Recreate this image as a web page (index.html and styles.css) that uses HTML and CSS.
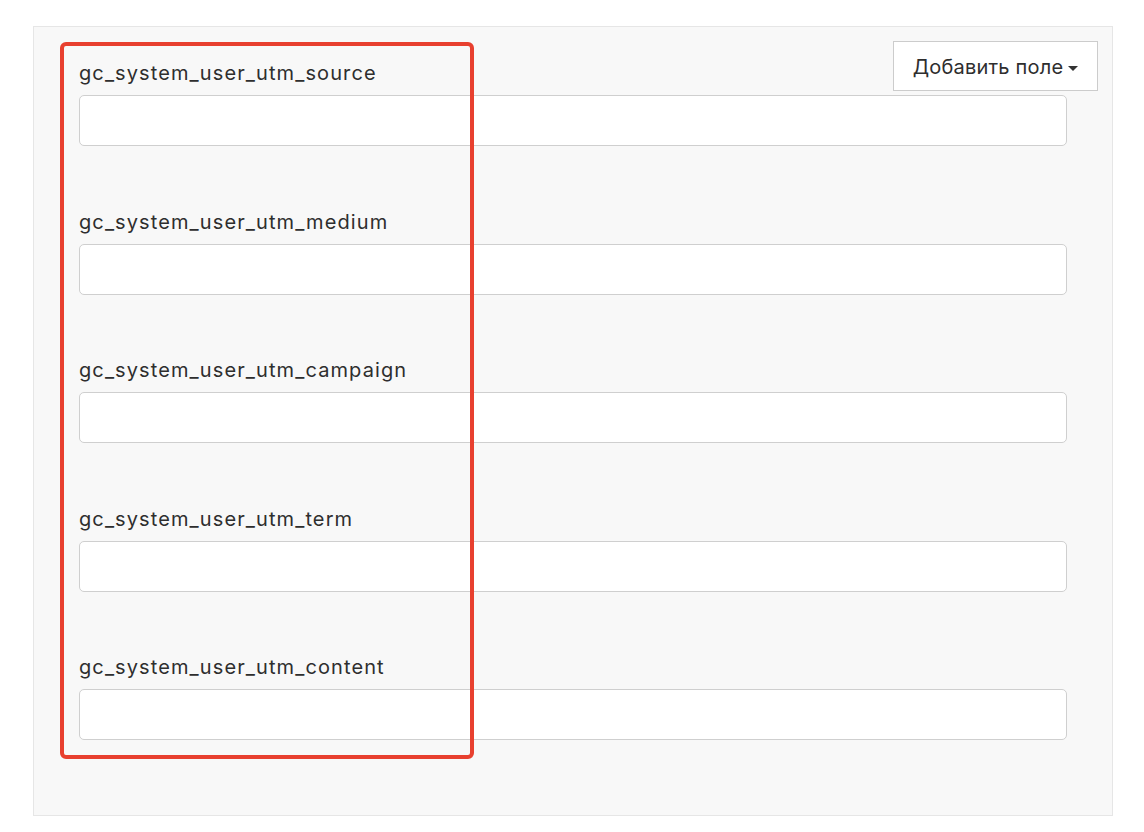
FILE: index.html
```html
<!DOCTYPE html>
<html lang="ru">
<head>
<meta charset="utf-8">
<link rel="stylesheet" href="styles.css">
</head>
<body>
<div class="panel">
  <button class="add-btn" type="button">Добавить поле <span class="caret"></span></button>
  <form class="fields">
    <div class="field">
      <label class="label">gc_system_user_utm_source</label>
      <input class="input" type="text">
    </div>
    <div class="field">
      <label class="label">gc_system_user_utm_medium</label>
      <input class="input" type="text">
    </div>
    <div class="field">
      <label class="label">gc_system_user_utm_campaign</label>
      <input class="input" type="text">
    </div>
    <div class="field">
      <label class="label">gc_system_user_utm_term</label>
      <input class="input" type="text">
    </div>
    <div class="field">
      <label class="label">gc_system_user_utm_content</label>
      <input class="input" type="text">
    </div>
  </form>
  <div class="highlight"></div>
</div>
</body>
</html>
```

FILE: styles.css
```css
html, body {
  margin: 0;
  padding: 0;
  background: #ffffff;
}
body {
  font-family: Inter, "Noto Sans", sans-serif;
  color: #333333;
}
.panel {
  position: relative;
  box-sizing: border-box;
  margin: 26px 0 0 33px;
  width: 1080px;
  height: 790px;
  background: #f8f8f8;
  border: 1px solid #e6e6e6;
  padding: 33px 45px 0 45px;
}
.fields {
  display: flex;
  flex-direction: column;
  gap: 62.5px;
}
.field {
  display: flex;
  flex-direction: column;
  gap: 9px;
}
.label {
  font-size: 20px;
  line-height: 26px;
  letter-spacing: 1.1px;
  color: #2e2e2e;
}
.input {
  box-sizing: border-box;
  display: block;
  width: 100%;
  height: 51px;
  margin: 0;
  background: #ffffff;
  border: 1px solid #cfcfcf;
  border-radius: 5px;
  font: inherit;
}
.add-btn {
  position: absolute;
  top: 14px;
  right: 14px;
  box-sizing: border-box;
  width: 205px;
  height: 50px;
  background: #ffffff;
  border: 1px solid #cccccc;
  border-radius: 0;
  font-family: Inter, "Noto Sans", sans-serif;
  font-size: 20px;
  letter-spacing: 0.2px;
  color: #2e2e2e;
  padding: 2px 0 0 0;
  display: flex;
  align-items: center;
  justify-content: center;
  gap: 5px;
}
.caret {
  display: inline-block;
  width: 0;
  height: 0;
  border-left: 5px solid transparent;
  border-right: 5px solid transparent;
  border-top: 5px solid #333333;
  margin-top: 2px;
}
.highlight {
  position: absolute;
  left: 26px;
  top: 15px;
  width: 414px;
  height: 717px;
  box-sizing: border-box;
  border: 4px solid #e8402f;
  border-radius: 6px;
  pointer-events: none;
}
```
